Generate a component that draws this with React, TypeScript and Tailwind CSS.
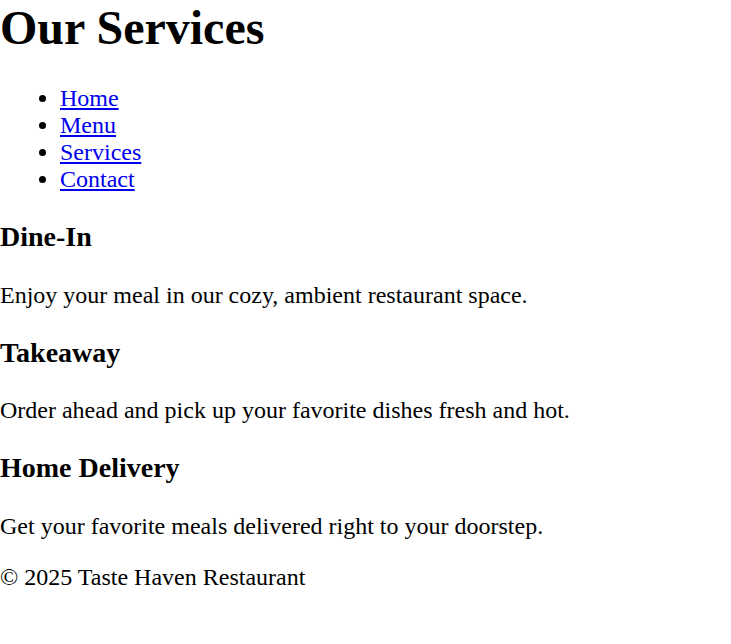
import React from 'react'

const links = ['Home', 'Menu', 'Services', 'Contact']

const services = [
  { title: 'Dine-In', text: 'Enjoy your meal in our cozy, ambient restaurant space.' },
  { title: 'Takeaway', text: 'Order ahead and pick up your favorite dishes fresh and hot.' },
  { title: 'Home Delivery', text: 'Get your favorite meals delivered right to your doorstep.' },
]

export default function App() {
  return (
    <div className="min-h-[644px] bg-white text-black font-['Liberation_Serif','Times_New_Roman',serif] text-[24px] leading-[normal]">
      <header>
        <h1 className="text-[48px] font-bold leading-[normal] mb-[30px]">Our Services</h1>
        <nav>
          <ul className="list-disc pl-[60px] mb-[24px]">
            {links.map((l) => (
              <li key={l}>
                <a href="#" className="text-[#0000ee] underline">{l}</a>
              </li>
            ))}
          </ul>
        </nav>
      </header>

      <main>
        {services.map((s) => (
          <section key={s.title}>
            <h3 className="text-[28px] font-bold leading-[normal] mt-[28px] mb-[28.5px]">{s.title}</h3>
            <p className="my-[24px]">{s.text}</p>
          </section>
        ))}
      </main>

      <footer>
        <p className="my-[24px]">© 2025 Taste Haven Restaurant</p>
      </footer>
    </div>
  )
}
